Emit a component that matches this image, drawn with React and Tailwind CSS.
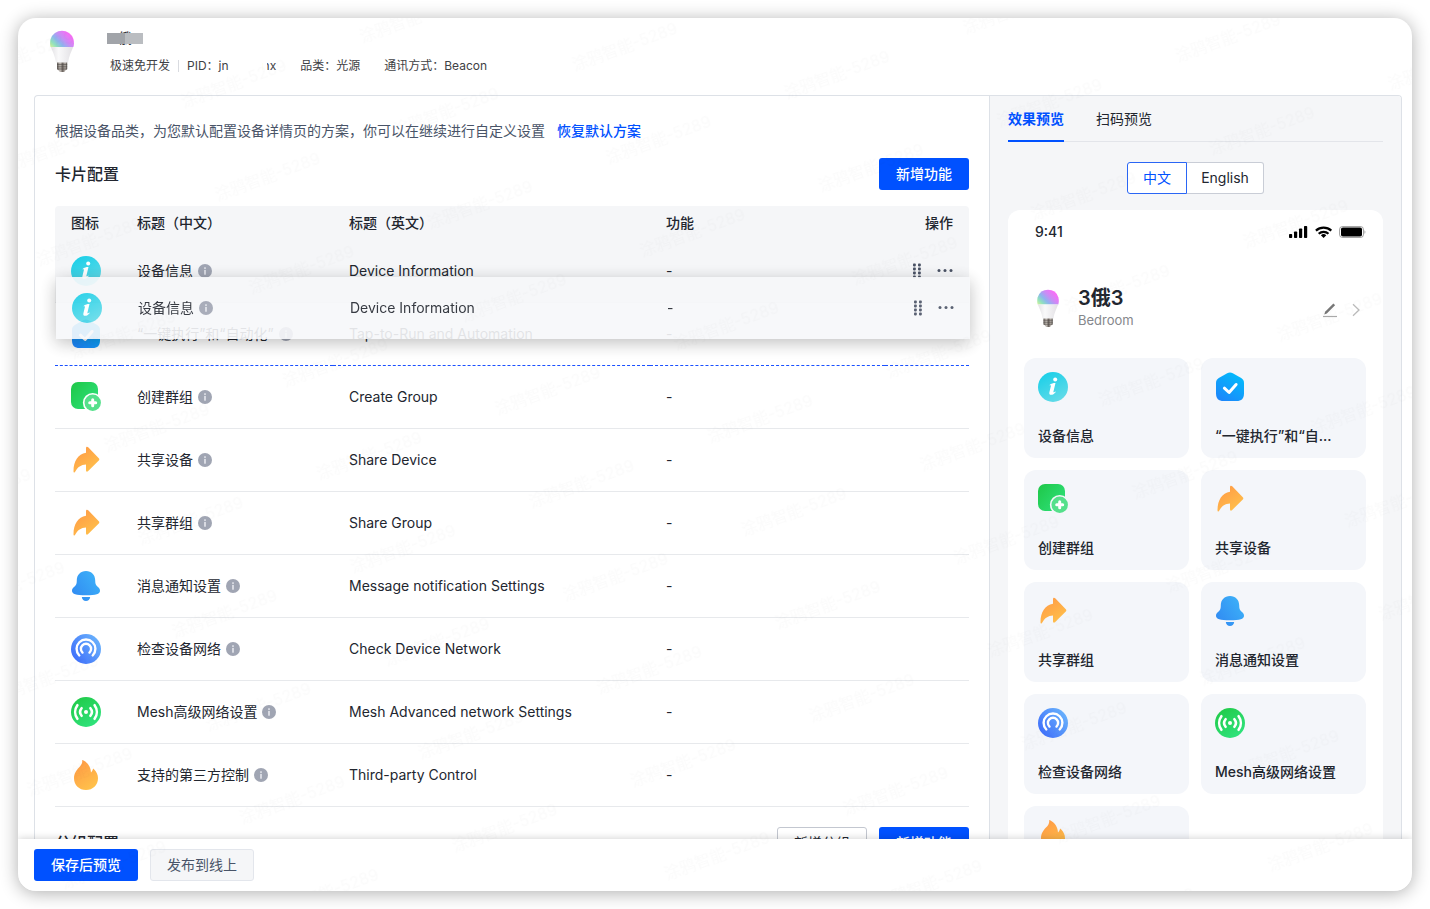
import React, { useId } from "react";

function InfoIcon() {
  const id = useId();
  return (
    <svg width="30" height="30" viewBox="0 0 30 30" aria-hidden="true">
      <defs>
        <linearGradient id={id} x1="0.2" y1="0.1" x2="0.7" y2="1">
          <stop offset="0" stopColor="#1fd0e8" />
          <stop offset="1" stopColor="#64dbe8" />
        </linearGradient>
      </defs>
      <circle cx="15" cy="15" r="15" fill={`url(#${id})`} />
      <circle cx="17.2" cy="7.6" r="2" fill="#fff" />
      <path
        d="M11.6 12.9c1.7-1.2 3.5-1.8 5.9-1.8l-2.1 8.6c-.2.8.3.9 1.9-.3l.5.6c-1.7 2-3.1 2.8-4.6 2.8-1.6 0-2.2-1-1.8-2.6l1.5-6.2c.2-.7-.1-.9-1.1-.5z"
        fill="#fff"
      />
    </svg>
  );
}

function TapIcon() {
  const id = useId();
  return (
    <svg width="30" height="30" viewBox="0 0 30 30" aria-hidden="true">
      <defs>
        <linearGradient id={id} x1="0.8" y1="0" x2="0.2" y2="1">
          <stop offset="0" stopColor="#00bdfb" />
          <stop offset="1" stopColor="#1d86fb" />
        </linearGradient>
      </defs>
      <path
        d="M12.2 1.2c1.8-1 3.8-1 5.6 0l8.4 4.9C28 7.200 29 8.800 29 11v10.500c0 5-2.500 7.500-7.500 7.500h-13C3.500 29 1 26.500 1 21.500V11c0-2.200 1-3.800 2.800-4.900z"
        fill={`url(#${id})`}
      />
      <path d="M9.400 16.200l4.700 4.300 7-8" fill="none" stroke="#fff" strokeWidth="3" strokeLinecap="round" strokeLinejoin="round" />
    </svg>
  );
}

function GroupIcon() {
  const id = useId();
  return (
    <svg width="30" height="30" viewBox="0 0 30 30" aria-hidden="true">
      <defs>
        <linearGradient id={id} x1="0" y1="0.1" x2="1" y2="0.9">
          <stop offset="0" stopColor="#1fc84a" />
          <stop offset="1" stopColor="#2fe27c" />
        </linearGradient>
        <mask id={`${id}m`}>
          <rect width="30" height="30" fill="#fff" />
          <circle cx="21.7" cy="20.8" r="9.8" fill="#000" />
        </mask>
      </defs>
      <rect width="27" height="27" rx="7" fill={`url(#${id})`} mask={`url(#${id}m)`} />
      <circle cx="21.700" cy="20.800" r="8.200" fill="#55e08b" />
      <path d="M21.700 17.800v6M18.700 20.800h6" stroke="#fff" strokeWidth="3" strokeLinecap="round" />
    </svg>
  );
}

function ShareIcon() {
  const id = useId();
  return (
    <svg width="30" height="30" viewBox="0 0 30 30" aria-hidden="true">
      <defs>
        <linearGradient id={id} x1="0.2" y1="0.1" x2="0.8" y2="1">
          <stop offset="0" stopColor="#ff9d46" />
          <stop offset="1" stopColor="#ffc24b" />
        </linearGradient>
      </defs>
      <path
        d="M15 3.200c0-1.600 1.100-2 2.200-.9l10.600 11c.7.8.7 1.500 0 2.200L17.200 26c-1.100 1.100-2.200.8-2.200-.7v-5.700c-5 .3-8.200 2.400-10.700 7-.7 1.300-1.800 1-1.800-.4C2.600 16 7 9 15 7.700z"
        fill={`url(#${id})`}
      />
    </svg>
  );
}

function BellIcon() {
  const id = useId();
  return (
    <svg width="30" height="30" viewBox="0 0 30 30" aria-hidden="true">
      <defs>
        <linearGradient id={id} gradientUnits="userSpaceOnUse" x1="4" y1="22" x2="27" y2="6">
          <stop offset="0" stopColor="#328ff3" />
          <stop offset="1" stopColor="#3cb0f8" />
        </linearGradient>
      </defs>
      <path
        d="M15 0C9.500 0 5.800 4 5.800 9.300c0 3.200-.4 4.800-2.200 6.200C1.800 16.900 1 18.200 1 19.700c0 3.300 4 4.600 14 4.600s14-1.300 14-4.600c0-1.500-.8-2.800-2.600-4.200-1.800-1.400-2.200-3-2.200-6.200C24.200 4 20.500 0 15 0z"
        fill={`url(#${id})`}
      />
      <path d="M10.800 26h8.400c-.3 2.500-2 4-4.200 4s-3.900-1.500-4.200-4z" fill={`url(#${id})`} />
    </svg>
  );
}

function NetworkIcon() {
  const id = useId();
  return (
    <svg width="30" height="30" viewBox="0 0 30 30" aria-hidden="true">
      <defs>
        <linearGradient id={id} x1="0.1" y1="0.8" x2="0.9" y2="0.2">
          <stop offset="0" stopColor="#4172fb" />
          <stop offset="1" stopColor="#67affc" />
        </linearGradient>
      </defs>
      <circle cx="15" cy="15" r="15" fill={`url(#${id})`} />
      <g fill="none" stroke="#fff" strokeWidth="2.400" strokeLinecap="round">
        <path d="M8.300 21.500a9.400 9.400 0 1 1 13.400 0" />
        <path d="M11.500 18.600a5.100 5.100 0 1 1 7 0" />
      </g>
    </svg>
  );
}

function MeshIcon() {
  const id = useId();
  return (
    <svg width="30" height="30" viewBox="0 0 30 30" aria-hidden="true">
      <defs>
        <linearGradient id={id} x1="0.2" y1="0.1" x2="0.8" y2="1">
          <stop offset="0" stopColor="#22cc4c" />
          <stop offset="1" stopColor="#30e47f" />
        </linearGradient>
      </defs>
      <circle cx="15" cy="15" r="15" fill={`url(#${id})`} />
      <circle cx="15" cy="15" r="2" fill="#fff" />
      <g fill="none" stroke="#fff" strokeWidth="2.600" strokeLinecap="round">
        <path d="M10.600 11.200a6 6 0 0 0 0 7.600M19.400 11.200a6 6 0 0 1 0 7.600" />
        <path d="M6.400 8.200a11.500 11.500 0 0 0 0 13.600M23.600 8.200a11.500 11.500 0 0 1 0 13.600" />
      </g>
    </svg>
  );
}

function FlameIcon() {
  const id = useId();
  return (
    <svg width="30" height="30" viewBox="0 0 30 30" aria-hidden="true">
      <defs>
        <linearGradient id={id} x1="0.2" y1="0.1" x2="0.7" y2="1">
          <stop offset="0" stopColor="#ff9d46" />
          <stop offset="1" stopColor="#ffc24b" />
        </linearGradient>
      </defs>
      <path
        d="M11.200.8c-.1-.7.300-.9.900-.6C16.400 2.300 19.800 6.800 20 12.500c1-.9 1.500-2 1.900-3.200.2-.6.700-.6 1.100-.1 2.600 2.600 4 5.700 4 9C27 25 21.800 30 15 30S3 25 3 18.200c0-4.800 2.300-7.800 5-10.700C10 5.400 11.500 3.200 11.200.8z"
        fill={`url(#${id})`}
      />
    </svg>
  );
}

function Bulb({ className }) {
  const id = useId();
  return (
    <svg className={className} viewBox="0 0 24 42" aria-hidden="true">
      <defs>
        <linearGradient id={`${id}a`} x1="0" y1="0.9" x2="0.9" y2="0.3">
          <stop offset="0" stopColor="#c8f0a0" />
          <stop offset="0.18" stopColor="#8fe0c0" />
          <stop offset="0.4" stopColor="#8fb4ee" />
          <stop offset="0.65" stopColor="#c98cf5" />
          <stop offset="1" stopColor="#fb6cf6" />
        </linearGradient>
        <linearGradient id={`${id}b`} x1="0" y1="0" x2="1" y2="0">
          <stop offset="0" stopColor="#e3e2e5" />
          <stop offset="0.35" stopColor="#f9f9fa" />
          <stop offset="1" stopColor="#e2e0e4" />
        </linearGradient>
        <linearGradient id={`${id}c`} x1="0" y1="0" x2="1" y2="0">
          <stop offset="0" stopColor="#5d5753" />
          <stop offset="0.3" stopColor="#c9c3bd" />
          <stop offset="0.55" stopColor="#6b645f" />
          <stop offset="0.8" stopColor="#bbb4ae" />
          <stop offset="1" stopColor="#4c4743" />
        </linearGradient>
      </defs>
      <path d="M.6 17C-.3 14.500 0 11 .6 9A12 12 0 0 1 23.400 9c.6 2 .9 5.500 0 8z" fill={`url(#${id}a)`} />
      <path d="M.8 17h22.400c-1.600 4-4.200 9-5.200 15.500H6C5 26 2.400 21 .8 17z" fill={`url(#${id}b)`} />
      <path d="M7 32.500h10.200v6.300c0 .8-2.200 1.200-2.800 3.200H9.800C9.200 40 7 39.600 7 38.800z" fill={`url(#${id}c)`} />
      <path d="M7 34.600h10.200M7 36.800h10.200M7 39h10.200" stroke="#4a4541" strokeWidth="0.600" />
    </svg>
  );
}

function InfoBadge() {
  return (
    <svg width="14" height="14" viewBox="0 0 14 14" className="shrink-0" role="img" aria-hidden="true">
      <circle cx="7" cy="7" r="7" fill="#a0a5b3" />
      <rect x="6.200" y="3.300" width="1.600" height="1.600" fill="#e6e8ee" />
      <rect x="6.200" y="5.900" width="1.600" height="4.800" fill="#e6e8ee" />
    </svg>
  );
}

function RowActions() {
  return (
    <div className="flex items-center justify-end gap-4">
      <button type="button" aria-label="拖动排序" className="cursor-grab">
        <svg width="8" height="16" viewBox="0 0 8 16" fill="#4a5265">
          {[1, 5, 9, 13].map((y) => (
            <g key={y}>
              <rect x="0" y={y - 0.4} width="2.800" height="2.800" rx="0.800" />
              <rect x="5" y={y - 0.4} width="2.800" height="2.800" rx="0.800" />
            </g>
          ))}
        </svg>
      </button>
      <button type="button" aria-label="更多操作">
        <svg width="16" height="4" viewBox="0 0 16 4" fill="#4a5265">
          <circle cx="2" cy="1.500" r="1.500" />
          <circle cx="8" cy="1.500" r="1.500" />
          <circle cx="14" cy="1.500" r="1.500" />
        </svg>
      </button>
    </div>
  );
}

const features = [
  { icon: InfoIcon, zh: "设备信息", en: "Device Information" },
  { icon: TapIcon, zh: "“一键执行”和“自动化”", short: "“一键执行”和“自...", en: "Tap-to-Run and Automation" },
  { icon: GroupIcon, zh: "创建群组", en: "Create Group" },
  { icon: ShareIcon, zh: "共享设备", en: "Share Device" },
  { icon: ShareIcon, zh: "共享群组", en: "Share Group" },
  { icon: BellIcon, zh: "消息通知设置", en: "Message notification Settings" },
  { icon: NetworkIcon, zh: "检查设备网络", en: "Check Device Network" },
  { icon: MeshIcon, zh: "Mesh高级网络设置", en: "Mesh Advanced network Settings" },
  { icon: FlameIcon, zh: "支持的第三方控制", en: "Third-party Control" },
];

function Columns() {
  return (
    <colgroup>
      <col className="w-[66px]" />
      <col className="w-[212px]" />
      <col />
      <col className="w-[235px]" />
      <col className="w-[84px]" />
    </colgroup>
  );
}

function FeatureRow({ item, cell, actions }) {
  const Icon = item.icon;
  return (
    <tr>
      <td className={`px-4 ${cell}`}><Icon /></td>
      <td className={`px-4 ${cell}`}>
        <div className="flex items-center gap-[5px] whitespace-nowrap">
          {item.zh}
          <InfoBadge />
        </div>
      </td>
      <td className={`px-4 ${cell}`}>{item.en}</td>
      <td className={`px-4 ${cell}`}>-</td>
      <td className={`px-4 ${cell}`}>{actions && <RowActions />}</td>
    </tr>
  );
}

function rowStyle(index) {
  if (index === 0) return "h-[63px] border-b border-[#e9ebee] bg-[#f5f6f8]";
  if (index === 1) return "h-[63px] border-b border-dashed border-b-[#1a50ff]";
  return "h-[63px] border-b border-[#e7e9ec]";
}

function Watermark() {
  return (
    <svg className="pointer-events-none absolute inset-0 h-full w-full" aria-hidden="true">
      <defs>
        <pattern id="watermark" width="190" height="99" patternUnits="userSpaceOnUse" patternTransform="translate(1096 646) rotate(-20)">
          <text x="76" y="50" fontSize="16" fill="#000" fillOpacity="0.016">涂鸦智能-5289</text>
        </pattern>
      </defs>
      <rect width="100%" height="100%" fill="url(#watermark)" />
    </svg>
  );
}

function Header() {
  return (
    <header className="flex h-[77px] shrink-0 items-start pl-8 pt-3">
      <Bulb className="h-[42px] w-6" />
      <div className="ml-[33px]">
        <h1 className="relative h-4 w-9 text-center text-sm leading-4 text-[#33363d]">
          俄
          <span className="absolute inset-x-0 top-[3px] flex h-[11px]">
            <span className="flex-1 bg-[#a1a4a9]" />
            <span className="flex-1 bg-[#babdc1]" />
          </span>
        </h1>
        <div className="ml-[3px] mt-[10px] flex items-center text-xs leading-5 text-[#3f4145]">
          <span>极速免开发</span>
          <span className="mx-2 h-3 w-px bg-[#d9dbe0]" />
          <span>PID：jn</span>
          <span className="relative ml-[34px]">
            nx
            <span className="absolute inset-y-0 left-0 w-1 bg-white" />
          </span>
          <span className="ml-6">品类：光源</span>
          <span className="ml-6">通讯方式：Beacon</span>
        </div>
      </div>
    </header>
  );
}

function ConfigPane() {
  return (
    <section className="min-w-0 flex-1 px-5 pt-6">
      <p className="text-sm leading-[22px] text-[#495468]">
        根据设备品类，为您默认配置设备详情页的方案，你可以在继续进行自定义设置
        <a href="#restore" className="ml-3 font-medium text-[#0051ff]">恢复默认方案</a>
      </p>
      <div className="mt-4 flex h-8 items-center justify-between">
        <h2 className="text-base font-medium">卡片配置</h2>
        <button type="button" className="h-8 w-[90px] rounded-[3px] bg-[#0051ff] text-sm font-medium text-white">新增功能</button>
      </div>
      <div className="relative mt-4">
        <table className="w-full table-fixed border-separate border-spacing-0 text-left text-sm">
          <Columns />
          <thead>
            <tr className="h-[34px]">
              <th className="rounded-tl bg-[#f5f6f8] px-4 font-medium">图标</th>
              <th className="bg-[#f5f6f8] px-4 font-medium">标题（中文）</th>
              <th className="bg-[#f5f6f8] px-4 font-medium">标题（英文）</th>
              <th className="bg-[#f5f6f8] px-4 font-medium">功能</th>
              <th className="rounded-tr bg-[#f5f6f8] px-4 text-right font-medium">操作</th>
            </tr>
          </thead>
          <tbody>
            {features.map((item, i) => (
              <FeatureRow key={item.en} item={item} cell={rowStyle(i)} actions={i === 0} />
            ))}
          </tbody>
        </table>
        <div className="absolute left-px top-[71px] w-full bg-[#f7f8fa] opacity-90 shadow-[0_4px_16px_rgba(0,0,0,0.28)]">
          <table className="w-full table-fixed border-separate border-spacing-0 text-left text-sm">
            <Columns />
            <tbody>
              <FeatureRow item={features[0]} cell="h-[62px]" actions />
            </tbody>
          </table>
        </div>
      </div>
      <div className="mt-5 flex h-8 items-center gap-3">
        <h2 className="flex-1 text-base font-medium">分组配置</h2>
        <button type="button" className="h-8 w-[90px] rounded-[3px] border border-[#c3c7d0] bg-white text-sm">新增分组</button>
        <button type="button" className="h-8 w-[90px] rounded-[3px] bg-[#0051ff] text-sm font-medium text-white">新增功能</button>
      </div>
    </section>
  );
}

function StatusIcons() {
  return (
    <svg width="77" height="14" viewBox="0 0 77 14" aria-hidden="true">
      <rect x="0" y="9" width="3.200" height="4" rx="0.800" />
      <rect x="5" y="6.500" width="3.200" height="6.500" rx="0.800" />
      <rect x="10" y="3.500" width="3.200" height="9.500" rx="0.800" />
      <rect x="15" y="1" width="3.200" height="12" rx="0.800" />
      <g fill="none" stroke="#000" strokeWidth="2.200">
        <path d="M26.900 5.600a11.300 11.300 0 0 1 15.400 0" />
        <path d="M29.700 8.700a7.200 7.200 0 0 1 9.800 0" />
      </g>
      <path d="M34.600 13l-2.700-2.700a3.900 3.900 0 0 1 5.400 0z" />
      <rect x="50.500" y="1.500" width="24" height="11" rx="3" fill="none" stroke="#000" strokeOpacity="0.350" />
      <rect x="52" y="2.500" width="21" height="9" rx="1.800" />
      <path d="M75.500 5.200v3.600c1.200-.5 1.200-3.100 0-3.600z" fillOpacity="0.400" />
    </svg>
  );
}

function PreviewPane() {
  return (
    <section className="w-[412px] shrink-0 border-l border-[#dde1e7] bg-[#f5f6f8] px-[18px]">
      <div role="tablist" className="flex h-[46px] gap-8 border-b border-[#e3e5ea] text-sm">
        <button type="button" role="tab" aria-selected="true" className="-mb-px border-b-2 border-[#0051ff] pt-0.5 font-bold text-[#0051ff]">效果预览</button>
        <button type="button" role="tab" aria-selected="false" className="-mb-px border-b-2 border-transparent pt-0.5">扫码预览</button>
      </div>
      <div className="mt-5 flex h-8 justify-center text-sm">
        <button type="button" className="w-[60px] rounded-l-[3px] border border-[#2a66f5] bg-white text-[#0051ff]">中文</button>
        <button type="button" className="w-[77px] rounded-r-[3px] border border-l-0 border-[#c9cdd6] bg-white">English</button>
      </div>
      <div className="mt-4 rounded-t-xl bg-white pb-4 pl-4 pr-[17px] pt-3">
        <div className="flex h-5 items-center justify-between pl-[11px]">
          <span className="text-sm font-medium leading-5">9:41</span>
          <StatusIcons />
        </div>
        <div className="mt-10 flex h-[52px] items-center pl-[13px] pr-1">
          <Bulb className="h-[38px] w-[22px]" />
          <div className="ml-[19px] flex-1">
            <div className="text-xl font-semibold leading-6">3俄3</div>
            <div className="text-[13px] leading-5 text-[#85878c]">Bedroom</div>
          </div>
          <div className="flex items-center gap-3 pt-1">
            <button type="button" aria-label="编辑">
              <svg width="16" height="16" viewBox="0 0 16 16">
                <path d="M1 14.500h14" stroke="#aaa" strokeWidth="1.200" />
                <path d="M2.300 12.400l.8-2.600 8.300-8.300 1.700 1.700-8.300 8.300z" fill="#777" />
              </svg>
            </button>
            <button type="button" aria-label="详情">
              <svg width="12" height="14" viewBox="0 0 12 14">
                <path d="M3 1.200l6 5.800-6 5.800" fill="none" stroke="#bbb" strokeWidth="1.300" />
              </svg>
            </button>
          </div>
        </div>
        <div className="mt-6 grid grid-cols-2 gap-3">
          {features.map((item) => {
            const Icon = item.icon;
            return (
              <div key={item.en} className="flex h-[100px] flex-col justify-between rounded-xl bg-[#f4f6fa] px-[14px] pb-3 pt-[14px]">
                <Icon />
                <div className="whitespace-nowrap text-sm font-medium leading-5">{item.short || item.zh}</div>
              </div>
            );
          })}
        </div>
      </div>
    </section>
  );
}

export default function App() {
  return (
    <div className="flex h-screen bg-white p-[18px] font-[Inter,'Noto_Sans_CJK_SC',sans-serif] text-[#22262f]">
      <div className="relative flex min-w-0 flex-1 flex-col overflow-hidden rounded-[18px] bg-white shadow-[0_2px_18px_rgba(0,0,0,0.32)]">
        <Header />
        <main className="mr-[10px] ml-4 flex min-h-0 flex-1 items-start overflow-hidden overflow-y-auto rounded-t border border-b-0 border-[#dde1e7] [scrollbar-width:none]">
          <ConfigPane />
          <PreviewPane />
        </main>
        <footer className="relative flex h-[52px] shrink-0 items-start gap-3 bg-white px-4 pt-[10px] text-sm shadow-[0_0_8px_rgba(0,0,0,0.2)]">
          <button type="button" className="h-8 w-[104px] rounded-[3px] bg-[#0051ff] font-medium text-white">保存后预览</button>
          <button type="button" className="h-8 w-[104px] rounded-[3px] border border-[#e3e6ec] bg-[#f5f6f8] text-[#495468]">发布到线上</button>
        </footer>
        <Watermark />
      </div>
    </div>
  );
}
